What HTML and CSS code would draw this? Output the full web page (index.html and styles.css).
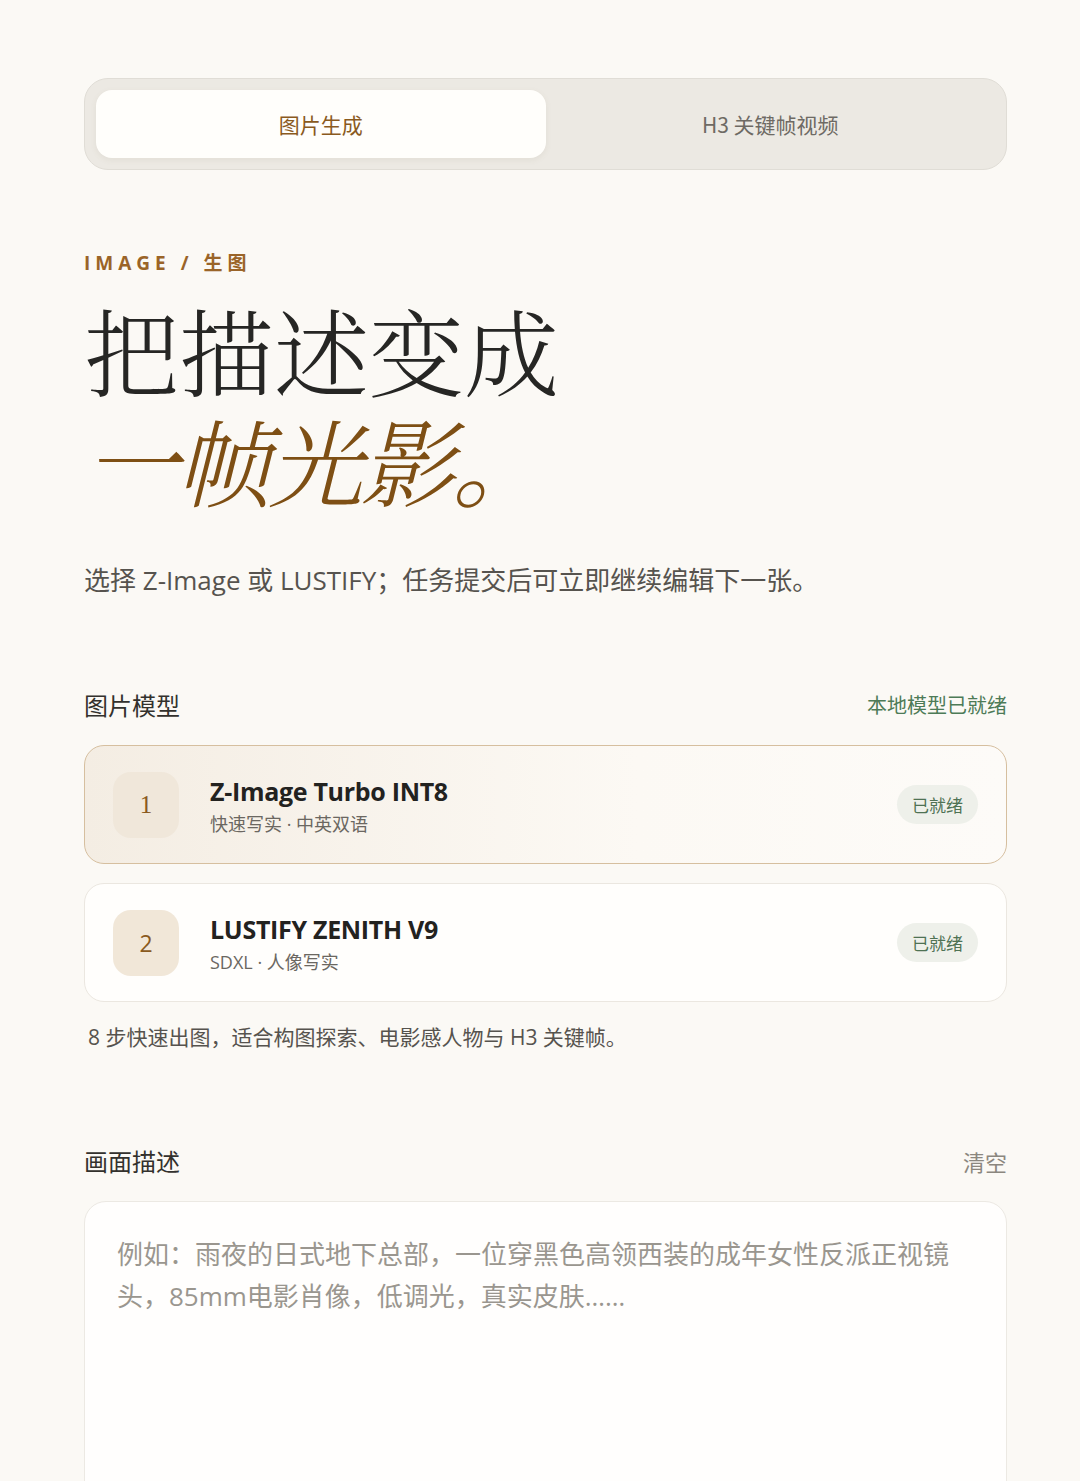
FILE: index.html
```html
<!DOCTYPE html>
<html lang="zh-CN">
<head>
    <meta charset="UTF-8">
    <meta name="viewport" content="width=device-width, initial-scale=1.0">
    <title>图片生成</title>
    <link rel="stylesheet" href="styles.css">
</head>
<body>
    <div class="page">
        <nav class="tabs">
            <button class="tab active">图片生成</button>
            <button class="tab">H3 关键帧视频</button>
        </nav>

        <header class="hero">
            <div class="eyebrow">IMAGE / 生图</div>
            <h1 class="title">把描述变成<br><em>一帧光影。</em></h1>
            <p class="lead">选择 Z-Image 或 LUSTIFY；任务提交后可立即继续编辑下一张。</p>
        </header>

        <section class="section models">
            <div class="section-head">
                <span class="section-title">图片模型</span>
                <span class="status">本地模型已就绪</span>
            </div>
            <div class="model selected">
                <div class="model-num serif">1</div>
                <div class="model-info">
                    <div class="model-name">Z-Image Turbo INT8</div>
                    <div class="model-meta">快速写实 · 中英双语</div>
                </div>
                <span class="badge">已就绪</span>
            </div>
            <div class="model">
                <div class="model-num">2</div>
                <div class="model-info">
                    <div class="model-name">LUSTIFY ZENITH V9</div>
                    <div class="model-meta">SDXL · 人像写实</div>
                </div>
                <span class="badge">已就绪</span>
            </div>
            <p class="hint">8 步快速出图，适合构图探索、电影感人物与 H3 关键帧。</p>
        </section>

        <section class="section prompt">
            <div class="section-head">
                <span class="section-title">画面描述</span>
                <button class="clear">清空</button>
            </div>
            <textarea class="prompt-box" placeholder="例如：雨夜的日式地下总部，一位穿黑色高领西装的成年女性反派正视镜头，85mm电影肖像，低调光，真实皮肤……"></textarea>
        </section>
    </div>
</body>
</html>
```

FILE: styles.css
```css
/* Base */
body {
    margin: 0;
    font-family: 'Open Sans', 'Noto Sans CJK SC', sans-serif;
    background: #fbf9f5;
    color: #2a2a28;
}

.page {
    padding: 78px 73px 0 84px;
}

/* Tabs */
.tabs {
    display: flex;
    padding: 11px;
    background: #ece9e3;
    border: 1px solid #e0ddd6;
    border-radius: 24px;
}

.tab {
    flex: 1;
    height: 68px;
    border: none;
    background: transparent;
    font-family: 'Noto Sans CJK SC', sans-serif;
    font-size: 21px;
    color: #6e6a64;
    border-radius: 16px;
    cursor: pointer;
}

.tab.active {
    background: #fffefb;
    color: #8a5a1e;
    box-shadow: 0 2px 6px rgba(120, 100, 70, 0.08);
}

/* Hero */
.hero {
    margin-top: 78px;
}

.eyebrow {
    font-size: 19px;
    font-weight: 700;
    letter-spacing: 5px;
    color: #9a6428;
}

.title {
    margin: 18px 0 0;
    font-family: 'Noto Serif CJK SC', 'Noto Sans CJK SC', serif;
    font-size: 95px;
    font-weight: 300;
    line-height: 110px;
    color: #262624;
}

.title em {
    font-style: italic;
    color: #7e4f14;
    letter-spacing: -3px;
}

.lead {
    margin: 46px 0 0;
    font-size: 26px;
    color: #56534e;
}

/* Sections */
.section-head {
    display: flex;
    justify-content: space-between;
    align-items: center;
    margin-bottom: 23px;
}

.section-title {
    font-family: 'Noto Sans CJK SC', sans-serif;
    font-size: 24px;
    color: #33312d;
}

.models {
    margin-top: 89px;
}

.status {
    font-family: 'Noto Sans CJK SC', sans-serif;
    font-size: 20px;
    color: #4d7b57;
}

/* Model cards */
.model {
    display: flex;
    align-items: center;
    height: 119px;
    padding: 0 28px;
    margin-bottom: 19px;
    background: #fffefc;
    border: 1px solid #ebe7e0;
    border-radius: 20px;
    box-sizing: border-box;
}

.model.selected {
    background: linear-gradient(90deg, #f4ede3, #fcf9f4 60%, #fdfbf8);
    border-color: #d6bf9f;
}

.model-num {
    width: 66px;
    height: 66px;
    display: flex;
    align-items: center;
    justify-content: center;
    border-radius: 18px;
    background: #f1e7d8;
    color: #8a5a1e;
    font-size: 23px;
}

.model.selected .model-num {
    background: #f0e7da;
}

.model-num.serif {
    font-family: 'Liberation Serif', serif;
    font-size: 25px;
}

.model-info {
    flex: 1;
    margin-left: 31px;
}

.model-name {
    font-size: 25px;
    font-weight: 700;
    letter-spacing: -0.3px;
    line-height: 34px;
    color: #23221f;
}

.model-meta {
    margin-top: 2px;
    font-size: 18px;
    color: #6b6761;
}

.badge {
    padding: 7px 15px;
    border-radius: 20px;
    background: #eef0ea;
    font-family: 'Noto Sans CJK SC', sans-serif;
    font-size: 17px;
    color: #4f7254;
}

.hint {
    margin: 18px 0 0 4px;
    font-size: 21px;
    color: #56534e;
}

/* Prompt */
.prompt {
    margin-top: 92px;
}

.clear {
    border: none;
    background: none;
    padding: 0;
    font-family: 'Noto Sans CJK SC', sans-serif;
    font-size: 22px;
    color: #8b877f;
    cursor: pointer;
}

.prompt-box {
    display: block;
    width: 100%;
    height: 320px;
    box-sizing: border-box;
    padding: 31px 44px 30px 32px;
    border: 1px solid #ece9e3;
    border-radius: 22px;
    background: #fffefd;
    font-family: inherit;
    font-size: 26px;
    line-height: 42px;
    color: #333;
    resize: none;
    outline: none;
}

.prompt-box::placeholder {
    color: #9a968f;
}
```
